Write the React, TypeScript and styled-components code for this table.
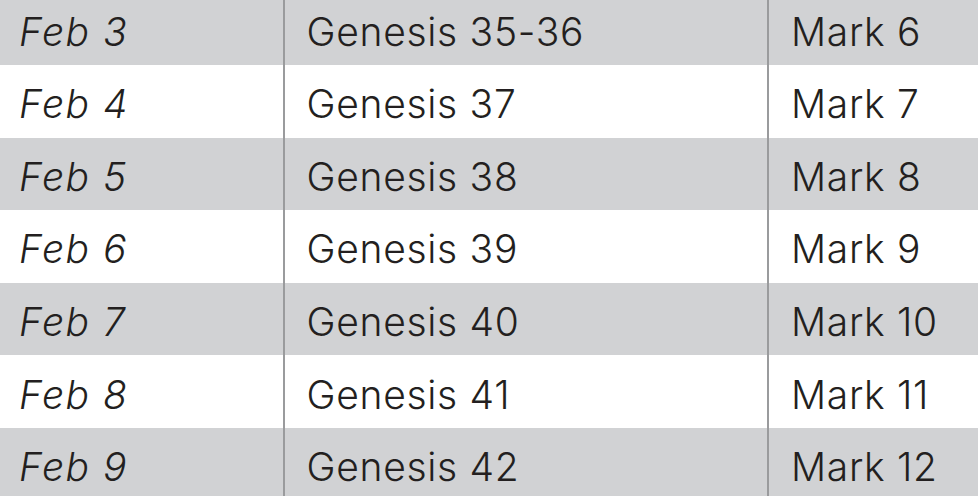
import styled, { createGlobalStyle } from "styled-components";

const GlobalStyle = createGlobalStyle`
  html, body {
    margin: 0;
    padding: 0;
    background: #ffffff;
    overflow: hidden;
  }
  body {
    font-family: "Inter", "Liberation Sans", sans-serif;
    color: #231f20;
  }
`;

const Page = styled.div`
  width: 978px;
  height: 496px;
  overflow: hidden;
`;

// the first row is cropped at the top in the screenshot
const Table = styled.div`
  display: grid;
  grid-template-columns: 282.5px 484.5px 1fr;
  margin-top: -7.6px;
`;

const Cell = styled.div<{ $shaded: boolean; $divider?: boolean; $italic?: boolean }>`
  height: 72.6px;
  display: flex;
  align-items: center;
  padding: 5px 0 0 ${(p) => (p.$divider ? "22px" : "19px")};
  box-sizing: border-box;
  background: ${(p) => (p.$shaded ? "#d1d2d4" : "#ffffff")};
  border-left: ${(p) => (p.$divider ? "2.5px solid #9a9b9d" : "none")};
  font-size: 39px;
  font-weight: 300;
  font-style: ${(p) => (p.$italic ? "italic" : "normal")};
  letter-spacing: ${(p) => (p.$italic ? "1.5px" : "0.7px")};
  white-space: nowrap;
`;

const rows = [
  ["Feb 3", "Genesis 35-36", "Mark 6"],
  ["Feb 4", "Genesis 37", "Mark 7"],
  ["Feb 5", "Genesis 38", "Mark 8"],
  ["Feb 6", "Genesis 39", "Mark 9"],
  ["Feb 7", "Genesis 40", "Mark 10"],
  ["Feb 8", "Genesis 41", "Mark 11"],
  ["Feb 9", "Genesis 42", "Mark 12"],
];

function App() {
  return (
    <Page>
      <GlobalStyle />
      <Table>
        {rows.map((r, i) => {
          const shaded = i % 2 === 0;
          return [
            <Cell key={`d${i}`} $shaded={shaded} $italic>
              {r[0]}
            </Cell>,
            <Cell key={`g${i}`} $shaded={shaded} $divider>
              {r[1]}
            </Cell>,
            <Cell key={`m${i}`} $shaded={shaded} $divider>
              {r[2]}
            </Cell>,
          ];
        })}
      </Table>
    </Page>
  );
}

export default App;
